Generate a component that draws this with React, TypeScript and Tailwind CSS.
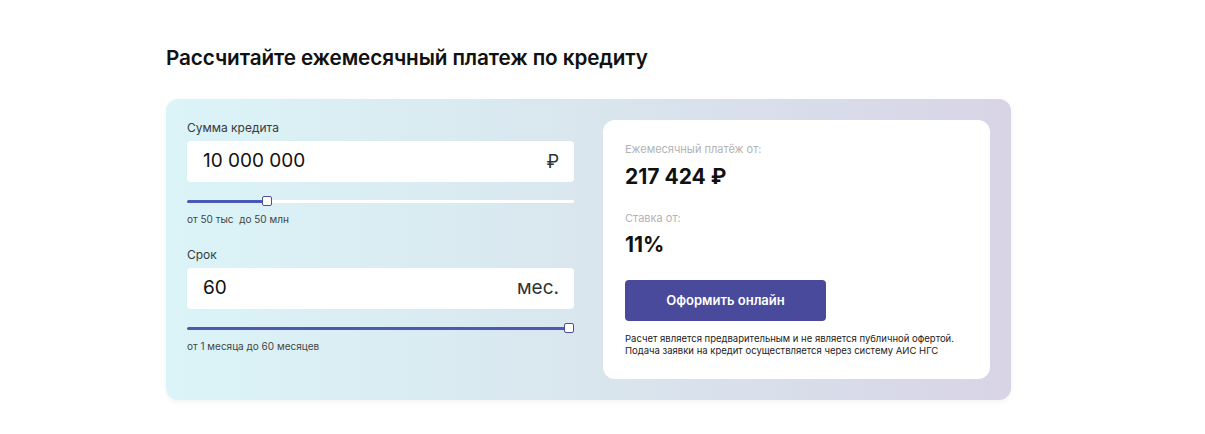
export default function App() {
  return (
    <div className="w-[1205px] h-[434px] bg-white font-['Inter',sans-serif] text-[#111]">
      <div className="ml-[166px] w-[845px] pt-[44px]">
        <h2 className="text-[20.7px] leading-[28px] font-semibold tracking-[-0.1px] text-[#111]">
          Рассчитайте ежемесячный платеж по кредиту
        </h2>

        <div className="mt-[27px] grid grid-cols-[387px_387px] gap-[29px] p-[21px] rounded-[12px] bg-gradient-to-r from-[#dbf4f8] via-[#d9e6ee] to-[#d8d4e6] shadow-[0_2px_6px_rgba(0,0,0,0.05)]">
          {/* Left: inputs */}
          <div>
            <div className="text-[12px] leading-[16px] text-[#3a3a3a]">Сумма кредита</div>
            <div className="mt-[5px] h-[41px] rounded-[4px] bg-white flex items-center justify-between pl-[16px] pr-[15px]">
              <span className="text-[19px] text-[#111]">10 000 000</span>
              <span className="text-[18px] text-[#333]">₽</span>
            </div>
            <Slider percent={20.7} />
            <div className="mt-[6px] text-[10px] leading-[14px] text-[#444]">от 50 тыс&nbsp; до 50 млн</div>

            <div className="mt-[21px] text-[12px] leading-[16px] text-[#3a3a3a]">Срок</div>
            <div className="mt-[5px] h-[41px] rounded-[4px] bg-white flex items-center justify-between pl-[16px] pr-[15px]">
              <span className="text-[19px] text-[#111]">60</span>
              <span className="text-[19px] text-[#333]">мес.</span>
            </div>
            <Slider percent={100} />
            <div className="mt-[6px] text-[10px] leading-[14px] text-[#444]">от 1 месяца до 60 месяцев</div>
          </div>

          {/* Right: result */}
          <div className="rounded-[12px] bg-white px-[22px] pt-[22px] pb-[22px]">
            <div className="text-[11px] leading-[14px] text-[#b3b3b3]">Ежемесячный платёж от:</div>
            <div className="mt-[8px] text-[21px] leading-[26px] font-bold text-[#111]">217 424 ₽</div>
            <div className="mt-[21px] text-[11px] leading-[14px] text-[#b3b3b3]">Ставка от:</div>
            <div className="mt-[7px] text-[21px] leading-[26px] font-bold text-[#111]">11%</div>
            <button className="mt-[22px] w-[201px] h-[41px] rounded-[4px] bg-[#494a9b] text-white text-[13px] font-semibold">
              Оформить онлайн
            </button>
            <p className="mt-[12px] text-[9.5px] leading-[12px] text-[#222]">
              Расчет является предварительным и не является публичной офертой.
              <br />
              Подача заявки на кредит осуществляется через систему АИС НГС
            </p>
          </div>
        </div>
      </div>
    </div>
  )
}

function Slider({ percent }: { percent: number }) {
  return (
    <div className="mt-[14px] relative h-[10px] flex items-center">
      <div className="w-full h-[3px] rounded-full bg-white" />
      <div className="absolute left-0 h-[3px] rounded-full bg-[#4a5ab4]" style={{ width: `${percent}%` }} />
      <div
        className="absolute w-[10px] h-[10px] rounded-[2px] border-[1.5px] border-[#4a4fa6] bg-white"
        style={{ left: `calc(${percent}% - ${percent >= 100 ? 10 : 5}px)` }}
      />
    </div>
  )
}
